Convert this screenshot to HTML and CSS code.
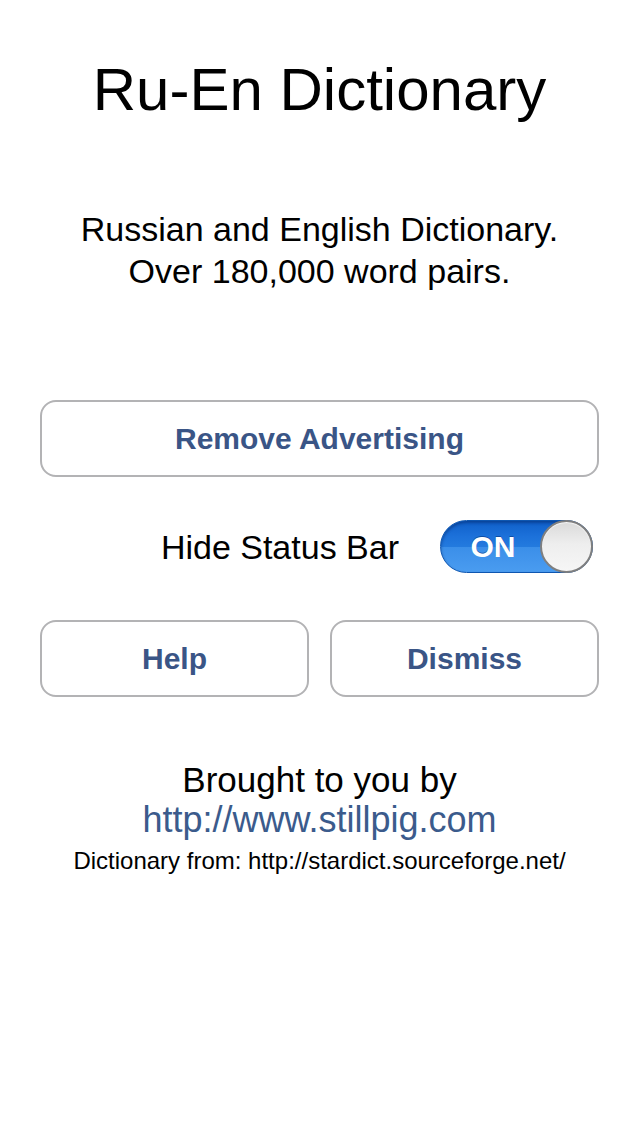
FILE: index.html
```html
<!DOCTYPE html>
<html>
<head>
<meta charset="utf-8">
<link rel="stylesheet" href="styles.css">
</head>
<body>
<main class="page">
  <h1 class="title">Ru-En Dictionary</h1>
  <p class="subtitle">Russian and English Dictionary.<br>Over 180,000 word pairs.</p>
  <button class="btn btn-wide">Remove Advertising</button>
  <div class="toggle-row">
    <span class="toggle-label">Hide Status Bar</span>
    <div class="switch">
      <span class="switch-on">ON</span>
      <span class="switch-knob"></span>
    </div>
  </div>
  <div class="btn-row">
    <button class="btn">Help</button>
    <button class="btn">Dismiss</button>
  </div>
  <div class="credits">
    <div class="brought">Brought to you by</div>
    <div class="link">http://www.stillpig.com</div>
    <div class="source">Dictionary from: http://stardict.sourceforge.net/</div>
  </div>
</main>
</body>
</html>
```

FILE: styles.css
```css
html, body {
  margin: 0;
  padding: 0;
  background: #ffffff;
}
body {
  font-family: "Liberation Sans", Arial, Helvetica, sans-serif;
  color: #000;
  width: 640px;
  height: 1136px;
  overflow: hidden;
}
.page {
  display: flex;
  flex-direction: column;
  padding: 60px 41px 0 40px;
}
.title {
  margin: 0;
  font-weight: normal;
  font-size: 60px;
  line-height: 60px;
  text-align: center;
}
.subtitle {
  margin: 88px 0 0 0;
  font-size: 34px;
  line-height: 42px;
  text-align: center;
}
.btn {
  box-sizing: border-box;
  height: 77px;
  border: 2px solid #b3b3b5;
  border-radius: 16px;
  background: #fff;
  font-family: "Liberation Sans", Arial, Helvetica, sans-serif;
  font-weight: bold;
  font-size: 30px;
  color: #3a5586;
  padding: 0;
  display: flex;
  align-items: center;
  justify-content: center;
}
.btn-wide {
  margin-top: 108px;
  width: 100%;
}
.toggle-row {
  margin-top: 43px;
  display: flex;
  align-items: center;
  justify-content: flex-end;
  padding-right: 6px;
  gap: 41px;
}
.toggle-label {
  font-size: 34px;
  line-height: 40px;
}
.switch {
  box-sizing: border-box;
  position: relative;
  width: 153px;
  height: 53px;
  border-radius: 27px;
  border: 1px solid #0e56b0;
  background: linear-gradient(to bottom, #0f5fc9 0%, #1c71da 30%, #237ade 50%, #3b8fe9 52%, #4a9cf0 100%);
  box-shadow: inset 0 2px 3px rgba(0, 30, 90, 0.45);
  display: flex;
  align-items: center;
}
.switch-on {
  width: 104px;
  text-align: center;
  color: #fff;
  font-weight: bold;
  font-size: 30px;
  line-height: 30px;
  padding-top: 1px;
  text-shadow: 0 -1px 0 rgba(0, 40, 110, 0.5);
}
.switch-knob {
  position: absolute;
  right: -1px;
  top: -1px;
  box-sizing: border-box;
  width: 53px;
  height: 53px;
  border-radius: 50%;
  border: 2px solid #7f7f7f;
  background: linear-gradient(to bottom, #dadada 0%, #eeeeee 45%, #f6f6f6 100%);
  box-shadow: inset 0 1px 1px rgba(255, 255, 255, 0.8);
}
.btn-row {
  margin-top: 47px;
  display: flex;
  gap: 21px;
}
.btn-row .btn {
  flex: 1;
}
.credits {
  margin-top: 63px;
  text-align: center;
}
.brought {
  font-size: 35px;
  line-height: 40px;
}
.link {
  font-size: 36px;
  line-height: 40px;
  color: #3b5b8c;
}
.source {
  margin-top: 3px;
  font-size: 24px;
  line-height: 36px;
}
```
